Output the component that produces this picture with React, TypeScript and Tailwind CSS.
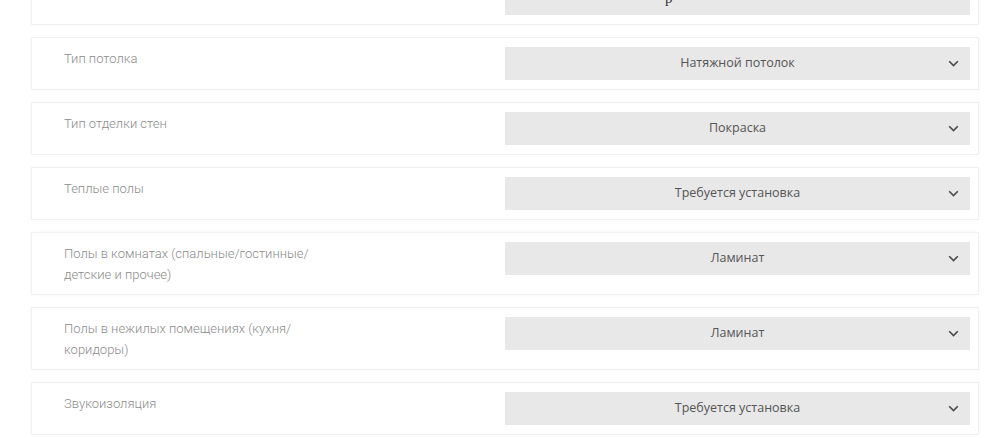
import React from "react";

type Row = { label: string; value: string };

const rows: Row[] = [
  { label: "Тип потолка", value: "Натяжной потолок" },
  { label: "Тип отделки стен", value: "Покраска" },
  { label: "Теплые полы", value: "Требуется установка" },
  { label: "Полы в комнатах (спальные/гостинные/ детские и прочее)", value: "Ламинат" },
  { label: "Полы в нежилых помещениях (кухня/ коридоры)", value: "Ламинат" },
  { label: "Звукоизоляция", value: "Требуется установка" },
];

function Chevron() {
  return (
    <svg width="11" height="7" viewBox="0 0 11 7" className="shrink-0">
      <polyline points="1.2,1.2 5.5,5.5 9.8,1.2" fill="none" stroke="#4a4a4a" strokeWidth="1.6" />
    </svg>
  );
}

function Select({ value }: { value: string }) {
  return (
    <div className="mt-[9px] mr-[8px] mb-[9px] w-[465px] h-[33px] bg-[#e8e8e8] flex items-center relative">
      <span
        className="flex-1 text-center text-[12.5px] text-[#555]"
        style={{ fontFamily: '"Open Sans", "Noto Sans", sans-serif' }}
      >
        {value}
      </span>
      <span className="absolute right-[11px] top-[13px] flex">
        <Chevron />
      </span>
    </div>
  );
}

const cardCls =
  "flex items-start bg-white shadow-[0_0_0_1px_#f1f1f1,0_0_4px_rgba(0,0,0,0.07)]";

function Card({ label, value }: Row) {
  return (
    <div className={cardCls}>
      <div
        className="flex-1 pl-[32px] pt-[10px] pb-[9px] pr-4 text-[13px] leading-[21px] font-light text-[#8c8c8c]"
        style={{ fontFamily: 'Roboto, "Liberation Sans", sans-serif' }}
      >
        <div className="max-w-[250px]">{label}</div>
      </div>
      <Select value={value} />
    </div>
  );
}

export default function App() {
  return (
    <div className="w-[1000px] h-[438px] overflow-hidden bg-white">
      <div className="ml-[32px] w-[946px] mt-[-27px] flex flex-col gap-[14px]">
        <div className={cardCls}>
          <div className="flex-1" />
          <div className="mt-[9px] mr-[8px] mb-[9px] w-[465px] h-[33px] bg-[#e8e8e8] flex items-end overflow-hidden pl-[160px]">
            <span
              className="text-[15px] leading-none text-[#333] translate-y-[-9px]"
              style={{ fontFamily: '"Liberation Serif", serif' }}
            >
              р
            </span>
          </div>
        </div>
        {rows.map((r) => (
          <Card key={r.label} label={r.label} value={r.value} />
        ))}
      </div>
    </div>
  );
}
